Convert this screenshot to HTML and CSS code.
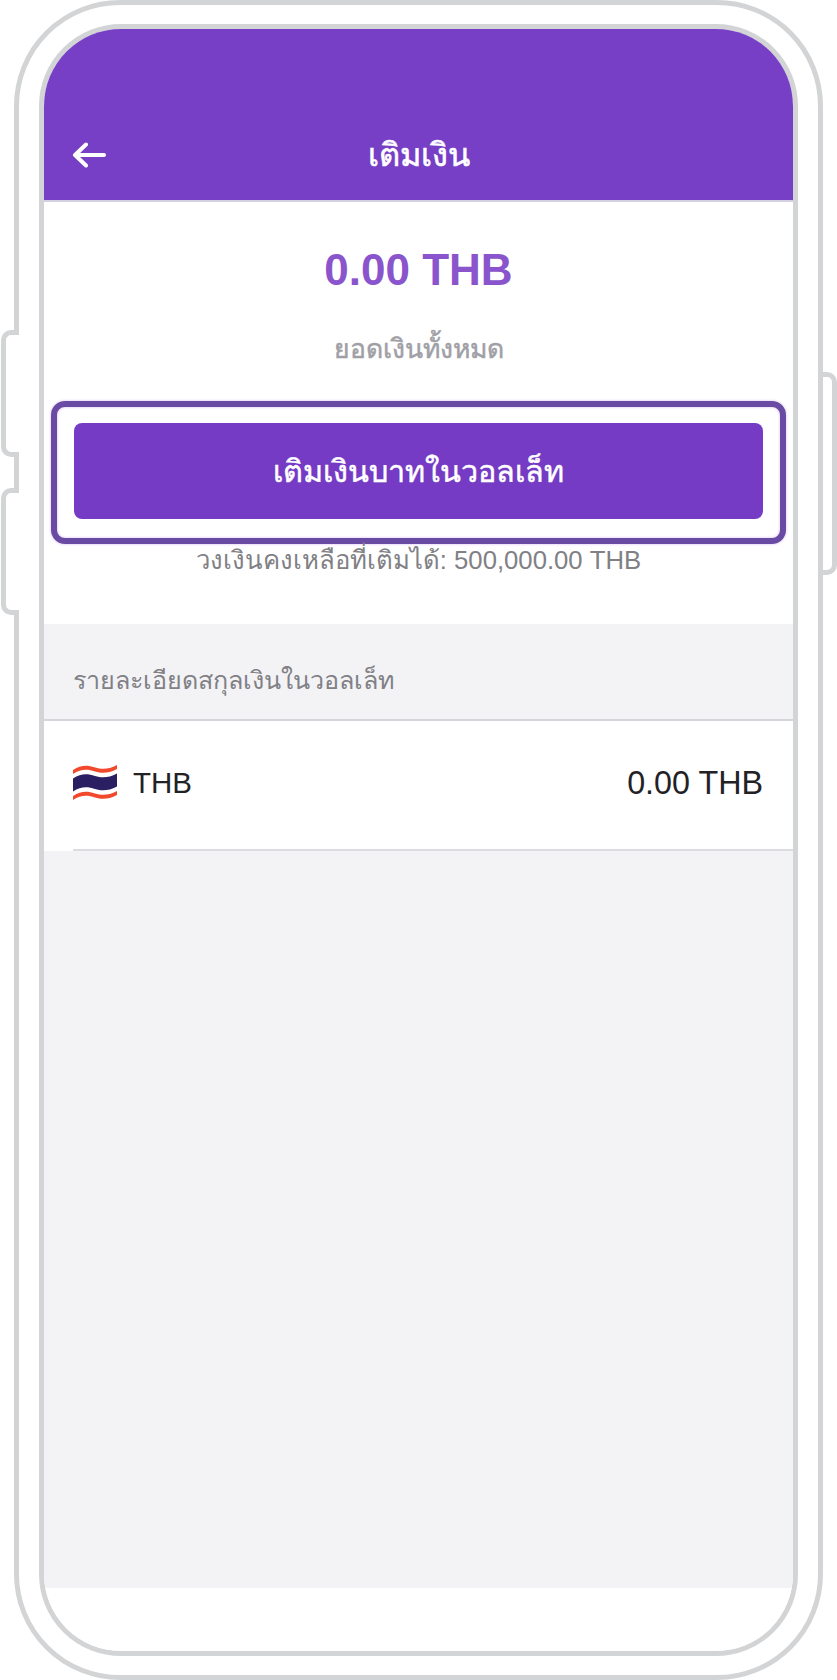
FILE: index.html
```html
<!DOCTYPE html>
<html lang="th">
<head>
    <meta charset="UTF-8">
    <meta name="viewport" content="width=device-width, initial-scale=1.0">
    <title>เติมเงิน</title>
    <link rel="stylesheet" href="styles.css">
</head>
<body>
    <div class="phone">
        <span class="side-btn side-btn-volup"></span>
        <span class="side-btn side-btn-voldown"></span>
        <span class="side-btn side-btn-power"></span>
        <div class="screen">
            <header class="topbar">
                <svg class="back-icon" width="34" height="26" viewBox="0 0 34 26" fill="none" stroke="#fff" stroke-width="4" stroke-linecap="round" stroke-linejoin="round">
                    <path d="M3 13H32M14 2.500L3 13L14 23.500"/>
                </svg>
                <h1>เติมเงิน</h1>
            </header>
            <section class="balance">
                <div class="balance-amount">0.00 THB</div>
                <div class="balance-label">ยอดเงินทั้งหมด</div>
                <div class="focus-ring">
                    <button class="topup-btn">เติมเงินบาทในวอลเล็ท</button>
                </div>
                <div class="limit">วงเงินคงเหลือที่เติมได้: 500,000.00 THB</div>
            </section>
            <section class="currency">
                <div class="currency-head">รายละเอียดสกุลเงินในวอลเล็ท</div>
                <div class="currency-list">
                    <div class="currency-row">
                        <svg class="flag" width="44" height="36" viewBox="0 0 44 36">
                            <path d="M0 5C8 0 14 0 22 2.500C30 5 36 4 44 0V30C36 34 30 35 22 32.500C14 30 8 30 0 35Z" fill="#fff"/>
                            <path d="M0 5C8 0 14 0 22 2.500C30 5 36 4 44 0V4C36 8 30 9 22 6.500C14 4 8 4 0 9Z" fill="#f2492c"/>
                            <path d="M0 13.500C8 8.500 14 8.500 22 11C30 13.500 36 12.500 44 8.500V21.500C36 25.500 30 26.500 22 24C14 21.500 8 21.500 0 26.500Z" fill="#2b1f63"/>
                            <path d="M0 31C8 26 14 26 22 28.500C30 31 36 30 44 26V30C36 34 30 35 22 32.500C14 30 8 30 0 35Z" fill="#f2492c"/>
                        </svg>
                        <span class="currency-code">THB</span>
                        <span class="currency-value">0.00 THB</span>
                    </div>
                </div>
            </section>
            <div class="screen-bottom"></div>
        </div>
    </div>
</body>
</html>
```

FILE: styles.css
```css
* {
    box-sizing: border-box;
}
body {
    margin: 0;
    background: #fff;
    font-family: "Liberation Sans", "Noto Sans", sans-serif;
}
.phone {
    position: relative;
    width: 809px;
    height: 1680px;
    margin-left: 14px;
    padding: 19px 20px;
    background: #fff;
    border: 5px solid #d3d4d6;
    border-radius: 106px;
}
.side-btn {
    position: absolute;
    border: 5px solid #d3d4d6;
    background: #fff;
}
.side-btn-volup, .side-btn-voldown {
    left: -18px;
    width: 18px;
    border-right: none;
    border-radius: 10px 0 0 10px;
}
.side-btn-volup {
    top: 325px;
    height: 127px;
}
.side-btn-voldown {
    top: 483px;
    height: 127px;
}
.side-btn-power {
    right: -19px;
    top: 367px;
    width: 14px;
    height: 203px;
    border-left: none;
    border-radius: 0 10px 10px 0;
}
.screen {
    display: flex;
    flex-direction: column;
    height: 1632px;
    background: #fff;
    border: 5px solid #d3d4d6;
    border-radius: 82px;
    overflow: hidden;
}
.topbar {
    position: relative;
    flex: none;
    display: flex;
    align-items: center;
    justify-content: center;
    height: 173px;
    padding-top: 87px;
    padding-bottom: 8px;
    background: #773fc6;
    border-bottom: 2px solid #d5cfe2;
    color: #fff;
}
.topbar h1 {
    margin: 0;
    font-size: 32.500px;
    font-weight: normal;
    -webkit-text-stroke: 0.6px #fff;
}
.back-icon {
    position: absolute;
    left: 28px;
    top: 113px;
}
.balance {
    flex: none;
    display: flex;
    flex-direction: column;
    align-items: center;
    height: 422px;
    padding: 42px 7px 0;
}
.balance-amount {
    font-size: 44px;
    line-height: 52px;
    font-weight: bold;
    color: #8a55cc;
}
.balance-label {
    margin-top: 32px;
    font-size: 26.500px;
    line-height: 42px;
    color: #a09fa6;
    -webkit-text-stroke: 0.5px #a09fa6;
}
.focus-ring {
    width: 735px;
    height: 143px;
    margin-top: 31px;
    padding: 16px 17px;
    border: 6px solid #6a4ba3;
    border-radius: 14px;
    box-shadow: 0 0 3px #d9b8f2, inset 0 0 3px #d9b8f2;
}
.topup-btn {
    display: block;
    width: 100%;
    height: 96px;
    background: #753bc4;
    border: none;
    border-radius: 8px;
    font-family: inherit;
    font-size: 30.500px;
    color: #fff;
    -webkit-text-stroke: 0.5px #fff;
}
.limit {
    margin-top: -2px;
    font-size: 25.700px;
    line-height: 36px;
    color: #808085;
}
.currency {
    flex: 1;
    background: #f3f3f6;
}
.currency-head {
    height: 97px;
    padding: 36px 0 0 29px;
    font-size: 25.100px;
    line-height: 40px;
    color: #808085;
    border-bottom: 2px solid #d5d5db;
}
.currency-list {
    padding-left: 29px;
    background: #fff;
}
.currency-row {
    display: flex;
    align-items: center;
    height: 130px;
    padding-right: 30px;
    padding-bottom: 4px;
    border-bottom: 2px solid #dcdce0;
    color: #222226;
}
.flag {
    flex: none;
    margin-right: 16px;
}
.currency-code {
    font-size: 29.500px;
}
.currency-value {
    margin-left: auto;
    font-size: 32.300px;
}
.screen-bottom {
    flex: none;
    height: 63px;
    background: #fff;
}
```
